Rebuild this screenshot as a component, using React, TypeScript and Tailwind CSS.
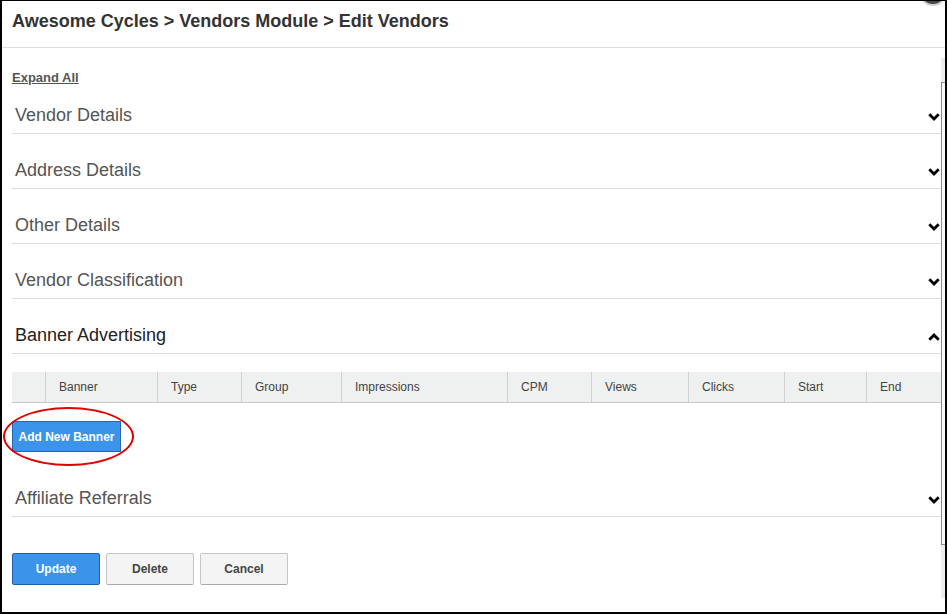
import React from "react";

const font = { fontFamily: '"Liberation Sans", Arial, sans-serif' };

function Chevron({ up = false }: { up?: boolean }) {
  return (
    <svg width="12" height="8" viewBox="0 0 12 8" className="mb-[5px]">
      <path
        d={up ? "M1.3 6.7 L6 2 L10.7 6.7" : "M1.3 1.3 L6 6 L10.7 1.3"}
        fill="none"
        stroke="#000"
        strokeWidth="2.8"
        strokeLinecap="butt"
        strokeLinejoin="miter"
      />
    </svg>
  );
}

function Section({ title, h, dark = false, up = false }: { title: string; h: string; dark?: boolean; up?: boolean }) {
  return (
    <div className={`${h} box-border border-b border-[#dddddd] flex items-end justify-between pb-[7px] pl-[3px] pr-[1px]`}>
      <span className={`text-[18px] leading-[22px] ${dark ? "text-[#222]" : "text-[#555]"}`}>{title}</span>
      <Chevron up={up} />
    </div>
  );
}

const cols: [string, number][] = [
  ["", 33],
  ["Banner", 112],
  ["Type", 84],
  ["Group", 100],
  ["Impressions", 166],
  ["CPM", 84],
  ["Views", 97],
  ["Clicks", 96],
  ["Start", 82],
  ["End", 75],
];

export default function App() {
  return (
    <div style={font} className="relative w-[947px] h-[614px] box-border border-2 border-t border-black bg-white overflow-hidden">
      {/* close button remnant */}
      <div className="absolute right-[0px] top-[-16px] w-[24px] h-[21px] rounded-full bg-[#4a4a4a] border-2 border-[#d4d4d4]" />
      <div className="h-[47px] box-border border-b border-[#dddddd] pl-[10px] pt-[10px]">
        <h1 className="text-[18px] leading-[20px] font-bold text-[#333]">
          Awesome Cycles &gt; Vendors Module &gt; Edit Vendors
        </h1>
      </div>
      <div className="flex">
        <div className="flex-1 pl-[10px]">
          <div className="pt-[23px] text-[13px] leading-[14px]">
            <a className="font-bold text-[#555] underline">Expand All</a>
          </div>
          <Section title="Vendor Details" h="h-[49px]" />
          <Section title="Address Details" h="h-[55px]" />
          <Section title="Other Details" h="h-[55px]" />
          <Section title="Vendor Classification" h="h-[55px]" />
          <Section title="Banner Advertising" h="h-[55px]" dark up />
          <div className="mt-[18px] flex h-[31px] box-border bg-[#eff0f0] border-b border-[#c8c8c8]">
            {cols.map(([c, w], i) => (
              <div
                key={i}
                style={{ width: w }}
                className={`flex items-center pl-[13px] text-[12px] text-[#444] ${i > 0 ? "border-l border-[#d0d0d0]" : ""}`}
              >
                {c}
              </div>
            ))}
          </div>
          <div className="relative mt-[18px] w-[109px] h-[31px]">
            <button className="block w-[109px] h-[31px] box-border bg-[#3b93ea] border border-[#2566ad] text-white text-[12px] font-bold">
              Add New Banner
            </button>
            <div className="absolute left-[-9px] top-[-14px] w-[131px] h-[59px] rounded-[50%] border-2 border-[#e00000] pointer-events-none" />
          </div>
          <Section title="Affiliate Referrals" h="h-[65px]" />
          <div className="mt-[36px] flex gap-[6px]">
            <button className="w-[88px] h-[32px] box-border bg-[#3b93ea] border border-[#1d5fa8] rounded-[2px] text-white text-[12px] font-bold">
              Update
            </button>
            <button className="w-[88px] h-[32px] box-border bg-[#f4f4f4] border border-[#c6c6c6] border-b-[#aaa] rounded-[2px] text-[#444] text-[12px] font-bold">
              Delete
            </button>
            <button className="w-[88px] h-[32px] box-border bg-[#f4f4f4] border border-[#c6c6c6] border-b-[#aaa] rounded-[2px] text-[#444] text-[12px] font-bold">
              Cancel
            </button>
          </div>
        </div>
        {/* scrollbar */}
        <div className="w-[4px] mt-[10px] h-[540px] bg-[#ececec] flex flex-col">
          <div className="mt-[24px] h-[463px] bg-[#f8f8f8] border-l border-t border-b border-[#8a8a8a]" />
        </div>
      </div>
    </div>
  );
}
